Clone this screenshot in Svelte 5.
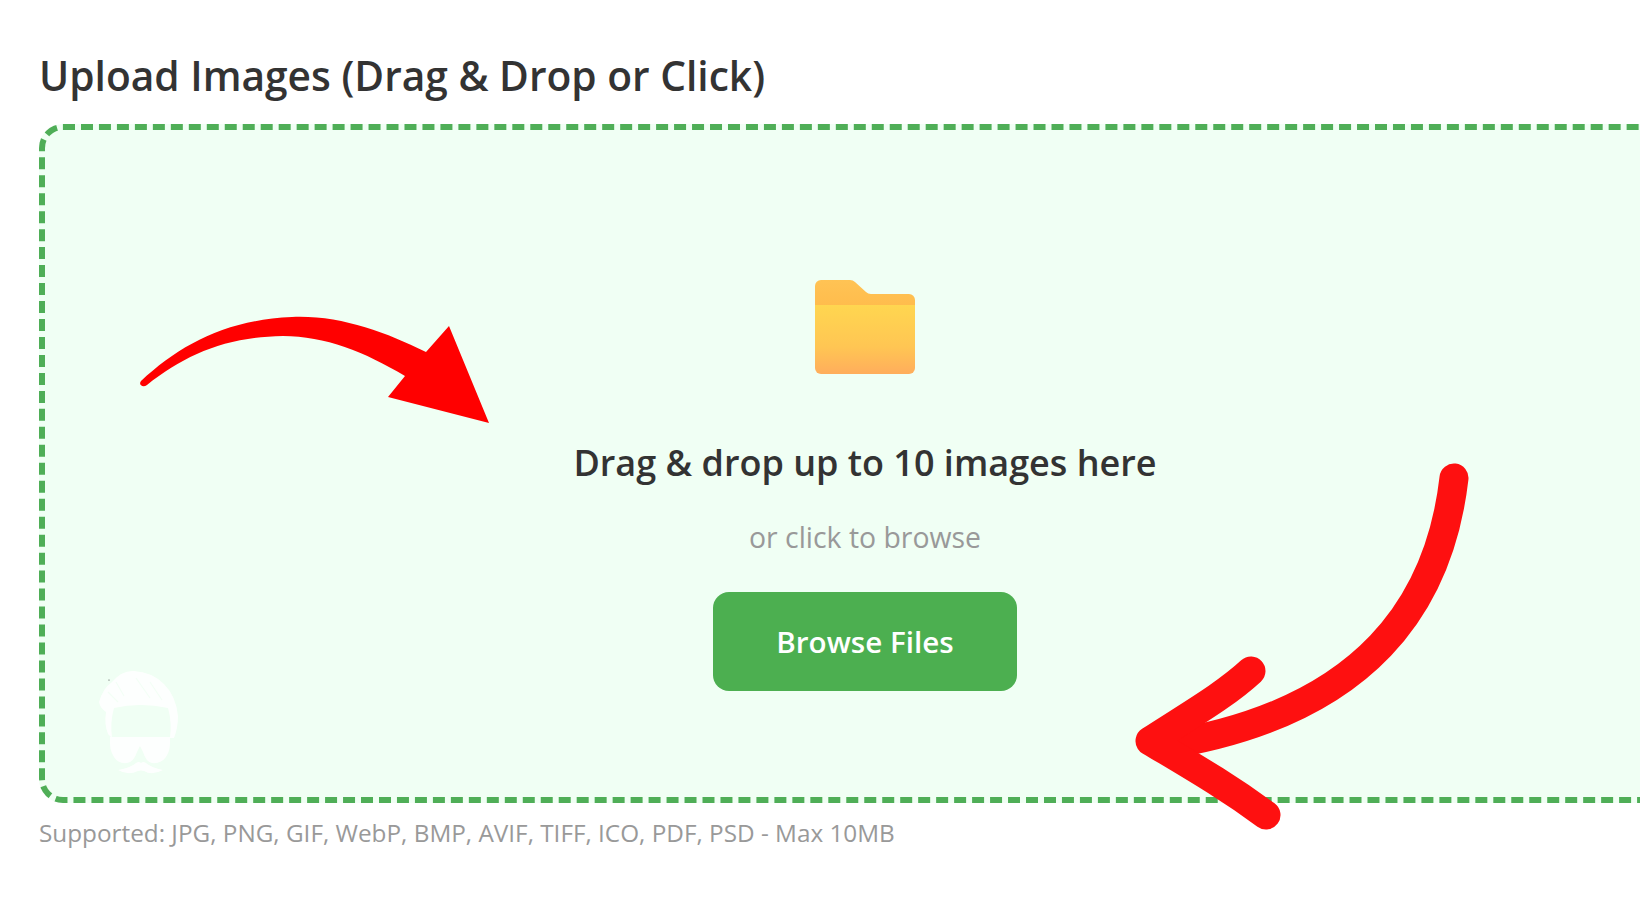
<script>
	const formats = 'JPG, PNG, GIF, WebP, BMP, AVIF, TIFF, ICO, PDF, PSD';
</script>

<main class="page">
	<h2 class="title">Upload Images (Drag &amp; Drop or Click)</h2>

	<div class="dropzone">
		<svg class="folder" viewBox="0 0 100 94" width="100" height="94" aria-hidden="true">
			<defs>
				<linearGradient id="folder-back" x1="0" y1="0" x2="0" y2="1">
					<stop offset="0" stop-color="#ffc354" />
					<stop offset="1" stop-color="#ffb646" />
				</linearGradient>
				<linearGradient id="folder-front" x1="0" y1="0" x2="0" y2="1">
					<stop offset="0" stop-color="#ffd650" />
					<stop offset="0.6" stop-color="#ffc653" />
					<stop offset="1" stop-color="#ffad5c" />
				</linearGradient>
			</defs>
			<path fill="url(#folder-back)" d="M0 6a6 6 0 0 1 6-6h29q3 0 5 2l11 10q2 2 5 2h38a6 6 0 0 1 6 6v30H0z" />
			<path fill="url(#folder-front)" d="M0 25h100v63a6 6 0 0 1-6 6H6a6 6 0 0 1-6-6z" />
		</svg>
		<h3 class="headline">Drag &amp; drop up to 10 images here</h3>
		<p class="hint">or click to browse</p>
		<button class="browse" type="button">Browse Files</button>
	</div>

	<p class="note">Supported: {formats} - Max 10MB</p>

	<!-- annotations drawn over the page -->
	<svg class="overlay" viewBox="0 0 1640 924" width="1640" height="924" aria-hidden="true">
		<g class="mark">
			<path fill="#fff" d="M99 702Q103 688 112 682Q122 670 134 671Q152 672 164 684Q176 696 178 716Q178 728 174 738L170 738Q172 722 168 708Q140 702 114 708Q110 722 112 738L108 734Q104 724 106 712Q100 708 99 702Z" />
			<path fill="none" stroke="#f0fff4" stroke-width="1.2" opacity="0.7" d="M116 682L124 696M136 678L150 698M150 682L162 700M108 692L118 702" />
			<path fill="#fff" d="M110 737H170Q171 750 166 757Q161 764 152 763Q146 762 143 752L140 746L137 752Q134 762 127 763Q118 764 114 757Q109 750 110 737Z" />
			<path fill="#fff" d="M118 770Q130 768 136 763Q139 761 141 763Q143 761 146 763Q152 768 163 770Q152 776 144 771Q141 770 138 771Q128 776 118 770Z" />
			<circle cx="109" cy="680" r="0.6" fill="#333" />
		</g>
		<path fill="#f00" d="M141 381C180 345 225 320 292 317C340 315 385 332 426 352L449 326L489 423L388 397L405 376C365 352 325 336 283 336C225 337 185 355 147 385C143 388 138 385 141 381Z" />
		<g fill="none" stroke="#fe1010" stroke-width="29" stroke-linecap="round" stroke-linejoin="round">
			<path d="M1454 478C1440 600 1370 714 1160 746" />
			<path d="M1251 671C1225 695 1190 715 1150 741C1190 765 1225 785 1266 815" />
		</g>
	</svg>
</main>

<style>
	:global(body) {
		background: #fff;
		overflow: hidden;
	}

	.page {
		position: relative;
		width: 1640px;
		height: 924px;
		overflow: hidden;
		padding: 47px 0 0 39px;
		box-sizing: border-box;
		font-family: "Open Sans", "Noto Sans", sans-serif;
	}

	.title {
		margin: 0 0 21px;
		font-size: 40.7px;
		line-height: 56px;
		font-weight: 600;
		color: #333;
	}

	.dropzone {
		box-sizing: border-box;
		width: 1652px;
		height: 679px;
		padding-top: 150px;
		display: flex;
		flex-direction: column;
		align-items: center;
		background: #f0fff4;
		border: 6px dashed #4fae57;
		border-radius: 24px;
	}

	.folder {
		display: block;
	}

	.headline {
		margin: 64px 0 0;
		font-size: 36px;
		line-height: 50px;
		font-weight: 600;
		color: #333;
	}

	.hint {
		margin: 29px 0 0;
		font-size: 28.4px;
		line-height: 40px;
		color: #999;
	}

	.browse {
		margin-top: 35px;
		width: 304px;
		height: 99px;
		border: 0;
		border-radius: 16px;
		background: #4caf50;
		color: #fff;
		font: 600 29.6px "Open Sans", "Noto Sans", sans-serif;
	}

	.note {
		margin: 13px 0 0;
		font-size: 24.3px;
		line-height: 34px;
		color: #999;
	}

	.overlay {
		position: absolute;
		left: 0;
		top: 0;
		pointer-events: none;
	}

	.mark {
		opacity: 0.92;
	}
</style>
